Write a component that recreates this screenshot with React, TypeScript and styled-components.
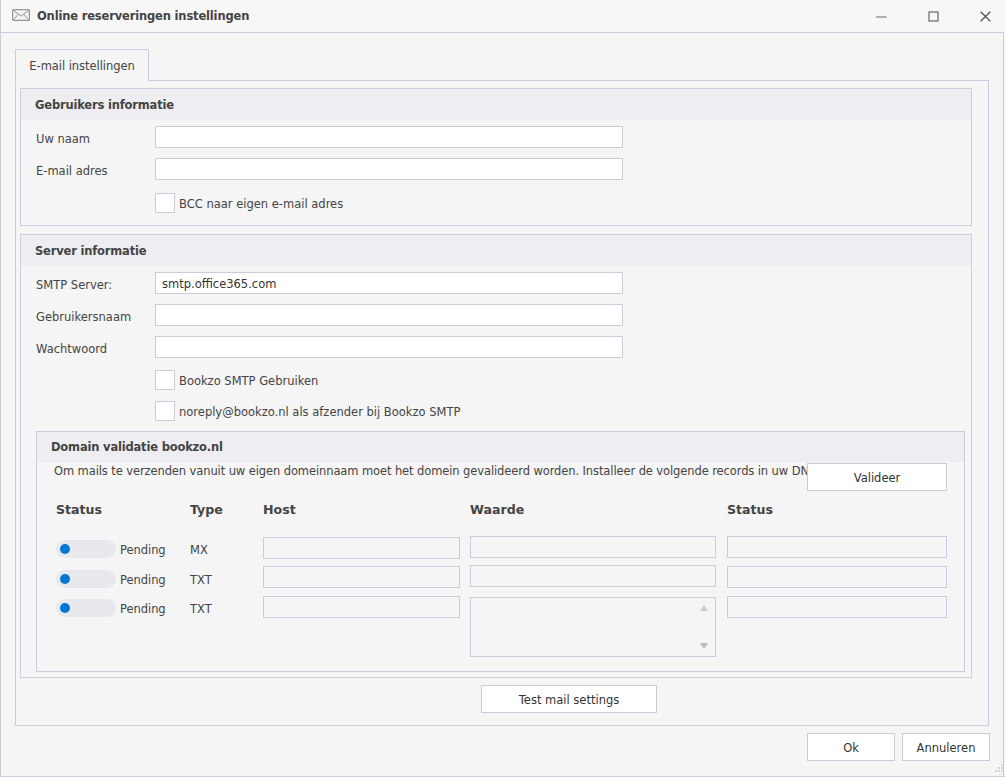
import React from "react";
import styled, { createGlobalStyle } from "styled-components";

const Global = createGlobalStyle`
  html, body { margin: 0; padding: 0; background: #f5f5f5; }
  body { font-family: "DejaVu Sans", Verdana, sans-serif; font-size: 11.5px; color: #444; }
`;
const border = "#ccccdc";

const Window = styled.div`
  box-sizing: border-box; width: 1005px; height: 777px; position: relative;
  display: flex; flex-direction: column; overflow: hidden;
  border-left: 1px solid ${border}; border-bottom: 1px solid ${border};
  background: #f5f5f5;
`;
const TitleBar = styled.header`
  flex: 0 0 32px; display: flex; align-items: center; margin-left: -1px; padding-left: 12px; background: #f7f7f7;
`;
const MailIcon = styled.svg`
  margin-top: -3px;
`;
const Title = styled.h1`
  margin: 0 0 0 7px; font-size: 11.5px; font-weight: 700; color: #444; letter-spacing: -0.16px;
`;
const WinControls = styled.div`
  margin-left: auto; display: flex; align-items: center; gap: 12px;
`;
const WinButton = styled.span`
  width: 40px; height: 30px; display: flex; align-items: center; justify-content: center;
`;
const Content = styled.main`
  flex: 1; min-height: 0; display: flex; flex-direction: column; padding: 16px 15px 0 14px;
  border-top: 1px solid ${border}; border-right: 1px solid ${border}; margin-right: 1px;
`;
const Tab = styled.div`
  box-sizing: border-box; width: 134px; height: 32px; margin-bottom: -1px; padding-top: 2px; position: relative; z-index: 1;
  display: flex; align-items: center; justify-content: center; letter-spacing: -0.05px;
  border: 1px solid ${border}; border-bottom: 1px solid #f5f5f5; background: #f5f5f5;
`;
const TabPanel = styled.div`
  box-sizing: border-box; width: 974px; height: 646px; padding: 7px 16px 0 4px; border: 1px solid ${border};
  display: flex; flex-direction: column; align-items: stretch;
`;
const Section = styled.section<{ $h: number }>`
  box-sizing: border-box; height: ${(p) => p.$h}px; border: 1px solid ${border}; margin-bottom: 8px;
`;
const SectionHead = styled.h2`
  margin: 0; height: 31px; padding-left: 14px; line-height: 33px; font-size: 11.5px; font-weight: 700;
  letter-spacing: -0.18px; background: #eeeef2; color: #444;
`;
const Form = styled.div`
  padding: 6px 0 0 15px; display: grid; grid-template-columns: 119px 468px; row-gap: 10px; align-items: center;
`;
const Label = styled.label`
  padding-top: 3px;
`;
const Input = styled.div`
  box-sizing: border-box; height: 22px; border: 1px solid ${border}; background: #fff;
  padding-left: 6px; line-height: 22px; color: #333;
`;
const CheckRow = styled.div<{ $mt: number }>`
  grid-column: 2; display: flex; align-items: center; gap: 4px; margin-top: ${(p) => p.$mt}px;
`;
const Check = styled.span`
  box-sizing: border-box; width: 20px; height: 20px; border: 1px solid ${border}; background: #fff;
`;
const CheckText = styled.span`
  padding-top: 2px;
`;
const Domain = styled.div`
  box-sizing: border-box; position: relative; height: 241px; margin: 10px 6px 0 15px; border: 1px solid ${border};
`;
const DomainHead = styled.h3`
  margin: 0; height: 30px; padding-left: 14px; line-height: 31px; font-size: 11.5px; font-weight: 700;
  letter-spacing: -0.18px; background: #eeeef2; color: #444;
`;
const Intro = styled.p`
  margin: 0; padding: 0 0 0 17px; height: 18px; line-height: 18px; white-space: nowrap; letter-spacing: -0.1px;
`;
const Button = styled.button<{ $w: number }>`
  box-sizing: border-box; width: ${(p) => p.$w}px; height: 28px; border: 1px solid ${border}; background: #fff;
  padding: 2px 0 0; font: inherit; color: #333; text-align: center;
`;
const ValidateSlot = styled.div`
  position: absolute; left: 770px; top: 31px;
`;
const Columns = styled.div`
  display: flex; padding: 20px 0 0 19px;
`;
const Column = styled.div<{ $w: number; $ml?: number }>`
  width: ${(p) => p.$w}px; margin-left: ${(p) => p.$ml ?? 0}px; flex: none;
`;
const Heading = styled.div`
  height: 37px; line-height: 20px; font-size: 12.6px; font-weight: 700; color: #444;
`;
const Field = styled.div<{ $mt: number; $h?: number }>`
  box-sizing: border-box; position: relative; height: ${(p) => p.$h ?? 22}px; margin-top: ${(p) => p.$mt}px;
  border: 1px solid ${border};
`;
const Up = styled.i`
  position: absolute; right: 7px; top: 7px; width: 0; height: 0;
  border-left: 4px solid transparent; border-right: 4px solid transparent; border-bottom: 6px solid #ccc;
`;
const Down = styled.i`
  position: absolute; right: 7px; bottom: 7px; width: 0; height: 0;
  border-left: 4px solid transparent; border-right: 4px solid transparent; border-top: 6px solid #bbb;
`;
const PendingRow = styled.div<{ $mt: number }>`
  display: flex; align-items: center; gap: 4px; height: 18px; margin-top: ${(p) => p.$mt}px;
`;
const PendingText = styled.span`
  letter-spacing: -0.05px; padding-top: 2px;
`;
const Toggle = styled.span`
  display: flex; align-items: center; box-sizing: border-box; width: 60px; height: 18px; padding-left: 4px;
  border-radius: 9px; background: #e8e9ed;
`;
const Dot = styled.span`
  width: 10px; height: 10px; border-radius: 50%; background: #0078d4;
`;
const TypeCell = styled.div<{ $mt: number }>`
  height: 18px; line-height: 20px; margin-top: ${(p) => p.$mt}px;
`;
const TestRow = styled.div`
  display: flex; padding-left: 461px; margin-top: -1px;
`;
const Footer = styled.footer`
  display: flex; justify-content: flex-end; gap: 7px; padding: 7px 0 0 0; margin-right: -2px;
`;
const Grip = styled.svg`
  position: absolute; right: 1px; bottom: 1px;
`;

const records = [
  { type: "MX", pend: 3, tm: 3, hm: 0 },
  { type: "TXT", pend: 12, tm: 12, hm: 7 },
  { type: "TXT", pend: 11, tm: 11, hm: 8 },
];

export default function App() {
  return (
    <Window>
      <Global />
      <TitleBar>
        <MailIcon width="18" height="12" viewBox="0 0 18 12" fill="none">
          <rect x="0.6" y="0.6" width="16.8" height="10.8" rx="1" fill="#f2f2f2" stroke="#969696" strokeWidth="1.2" />
          <path d="M1 1.2 9 7 17 1.2M1 11 6.5 5.3M17 11 11.5 5.3" stroke="#969696" />
        </MailIcon>
        <Title>Online reserveringen instellingen</Title>
        <WinControls>
          <WinButton>
            <svg width="11" height="11" viewBox="0 0 11 11"><path d="M0 6h10.5" stroke="#666" strokeWidth="1" /></svg>
          </WinButton>
          <WinButton>
            <svg width="11" height="11" viewBox="0 0 11 11"><rect x="1" y="1" width="9" height="9" fill="none" stroke="#666" strokeWidth="1.2" /></svg>
          </WinButton>
          <WinButton>
            <svg width="11" height="11" viewBox="0 0 11 11"><path d="M.7.7l9.6 9.6M10.3.7.7 10.3" stroke="#555" strokeWidth="1.3" /></svg>
          </WinButton>
        </WinControls>
      </TitleBar>
      <Content>
        <Tab>E-mail instellingen</Tab>
        <TabPanel>
          <Section $h={138}>
            <SectionHead>Gebruikers informatie</SectionHead>
            <Form>
              <Label>Uw naam</Label>
              <Input />
              <Label>E-mail adres</Label>
              <Input />
              <CheckRow $mt={3}><Check /><CheckText>BCC naar eigen e-mail adres</CheckText></CheckRow>
            </Form>
          </Section>
          <Section $h={444}>
            <SectionHead>Server informatie</SectionHead>
            <Form>
              <Label>SMTP Server:</Label>
              <Input>smtp.office365.com</Input>
              <Label>Gebruikersnaam</Label>
              <Input />
              <Label>Wachtwoord</Label>
              <Input />
              <CheckRow $mt={2}><Check /><CheckText>Bookzo SMTP Gebruiken</CheckText></CheckRow>
              <CheckRow $mt={1}><Check /><CheckText>noreply@bookzo.nl als afzender bij Bookzo SMTP</CheckText></CheckRow>
            </Form>
            <Domain>
              <DomainHead>Domain validatie bookzo.nl</DomainHead>
              <Intro>Om mails te verzenden vanuit uw eigen domeinnaam moet het domein gevalideerd worden. Installeer de volgende records in uw DNS:</Intro>
              <ValidateSlot><Button $w={140}>Valideer</Button></ValidateSlot>
              <Columns>
                <Column $w={134}>
                  <Heading>Status</Heading>
                  {records.map((r, i) => (
                    <PendingRow key={i} $mt={r.pend}><Toggle><Dot /></Toggle><PendingText>Pending</PendingText></PendingRow>
                  ))}
                </Column>
                <Column $w={73}>
                  <Heading>Type</Heading>
                  {records.map((r, i) => (
                    <TypeCell key={i} $mt={r.tm}>{r.type}</TypeCell>
                  ))}
                </Column>
                <Column $w={197}>
                  <Heading>Host</Heading>
                  {records.map((r, i) => <Field key={i} $mt={r.hm} />)}
                </Column>
                <Column $w={246} $ml={10}>
                  <Heading>Waarde</Heading>
                  <Field $mt={-1} />
                  <Field $mt={7} />
                  <Field $mt={10} $h={60}><Up /><Down /></Field>
                </Column>
                <Column $w={220} $ml={11}>
                  <Heading>Status</Heading>
                  <Field $mt={-1} />
                  <Field $mt={8} />
                  <Field $mt={8} />
                </Column>
              </Columns>
            </Domain>
          </Section>
          <TestRow><Button $w={176}>Test mail settings</Button></TestRow>
        </TabPanel>
        <Footer>
          <Button $w={88}>Ok</Button>
          <Button $w={88}>Annuleren</Button>
        </Footer>
      </Content>
      <Grip width="12" height="12" viewBox="0 0 12 12" fill="#d4d4dc">
        <rect x="9" y="1" width="2" height="2" /><rect x="6" y="4" width="2" height="2" /><rect x="9" y="4" width="2" height="2" />
        <rect x="3" y="7" width="2" height="2" /><rect x="6" y="7" width="2" height="2" /><rect x="9" y="7" width="2" height="2" />
      </Grip>
    </Window>
  );
}
